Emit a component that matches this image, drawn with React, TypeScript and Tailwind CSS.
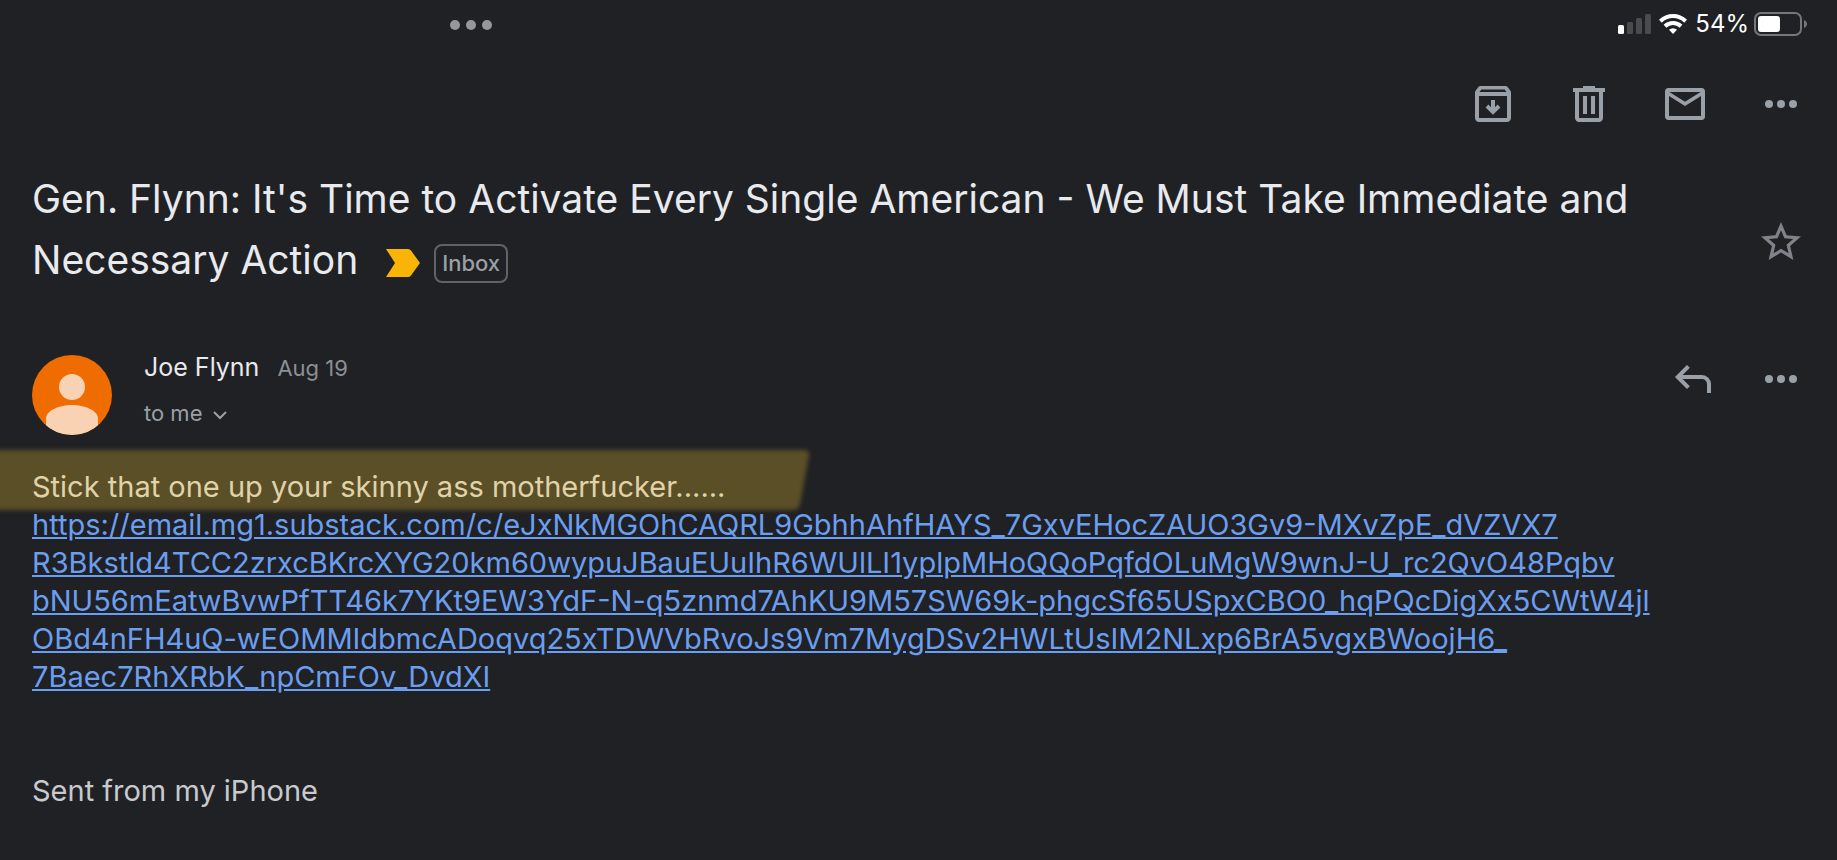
import React from 'react';

const LINK_HREF = '#message-link';

const linkLines = [
  'https://email.mg1.substack.com/c/eJxNkMGOhCAQRL9GbhhAhfHAYS_7GxvEHocZAUO3Gv9-MXvZpE_dVZVX7',
  'R3Bkstld4TCC2zrxcBKrcXYG20km60wypuJBauEUuIhR6WUlLI1yplpMHoQQoPqfdOLuMgW9wnJ-U_rc2QvO48Pqbv',
  'bNU56mEatwBvwPfTT46k7YKt9EW3YdF-N-q5znmd7AhKU9M57SW69k-phgcSf65USpxCBO0_hqPQcDigXx5CWtW4jl',
  'OBd4nFH4uQ-wEOMMIdbmcADoqvq25xTDWVbRvoJs9Vm7MygDSv2HWLtUsIM2NLxp6BrA5vgxBWoojH6_',
  '7Baec7RhXRbK_npCmFOv_DvdXI',
];

function IconButton({ label, children }: { label: string; children: React.ReactNode }) {
  return (
    <button type="button" aria-label={label} className="h-12 w-12 shrink-0 text-[#9aa0a8]">
      <svg viewBox="0 0 24 24" className="h-12 w-12" fill="currentColor">
        {children}
      </svg>
    </button>
  );
}

function MoreDots() {
  return (
    <>
      <circle cx="6" cy="12" r="2" />
      <circle cx="12" cy="12" r="2" />
      <circle cx="18" cy="12" r="2" />
    </>
  );
}

function StatusBar() {
  return (
    <div className="flex h-12 items-center pr-[30px]">
      <button type="button" aria-label="Multitasking" className="ml-[450px] mt-[2px] flex gap-[6px]">
        <span className="h-[10px] w-[10px] rounded-full bg-[#97979b]" />
        <span className="h-[10px] w-[10px] rounded-full bg-[#97979b]" />
        <span className="h-[10px] w-[10px] rounded-full bg-[#97979b]" />
      </button>
      <div className="ml-auto flex items-center">
        <svg width="33" height="20" viewBox="0 0 33 20" fill="#4b4b4e">
          <rect x="0" y="11" width="6" height="9" rx="1.5" fill="#fff" />
          <rect x="9" y="8" width="6" height="12" rx="1.5" />
          <rect x="18" y="4" width="6" height="16" rx="1.5" />
          <rect x="27" y="0" width="6" height="20" rx="1.5" />
        </svg>
        <svg width="28" height="20" viewBox="0 0 28 20" className="ml-2" fill="none" stroke="#fff" strokeWidth="4">
          <path d="M1.4 7.2a18 18 0 0 1 25.2 0" />
          <path d="M6 12.2a11.6 11.6 0 0 1 16 0" />
          <path d="M14 20l-4-4.2a6 6 0 0 1 8 0z" fill="#fff" stroke="none" />
        </svg>
        <span className="ml-2 text-2xl text-white">54%</span>
        <svg width="53" height="24" viewBox="0 0 53 24" className="ml-[5px]">
          <rect x="1" y="1" width="46" height="22" rx="6" fill="none" stroke="#77777b" strokeWidth="2" />
          <rect x="4" y="4" width="22" height="16" rx="3" fill="#fff" />
          <path d="M50 8c4 1.500 4 6.500 0 8z" fill="#77777b" />
        </svg>
      </div>
    </div>
  );
}

function Toolbar() {
  return (
    <div className="mt-8 flex justify-end gap-12 px-8">
      <IconButton label="Archive">
        <path
          fillRule="evenodd"
          d="M5.800 3h12.400c.5 0 .9.200 1.200.6l1.200 1.600c.3.300.4.700.4 1.200V19c0 1.100-.9 2-2 2H5c-1.100 0-2-.9-2-2V6.400c0-.5.100-.9.400-1.200l1.200-1.600c.3-.4.700-.6 1.200-.6zM6.200 4.800L5.200 6h13.600l-1-1.200zM5 8v11h14V8z"
        />
        <path d="M11 10v3.600l-1.300-1.300L8.300 13.700 12 17.400l3.700-3.700-1.400-1.400L13 13.600V10z" />
      </IconButton>
      <IconButton label="Delete">
        <path
          fillRule="evenodd"
          d="M9 3h6v1h5v2h-1v13c0 1.100-.9 2-2 2H7c-1.100 0-2-.9-2-2V6H4V4h5zM7 6v13h10V6z"
        />
        <path d="M9 8h2v9H9zM13 8h2v9h-2z" />
      </IconButton>
      <IconButton label="Mark as unread">
        <path
          fillRule="evenodd"
          d="M3.600 4h16.800c.9 0 1.600.7 1.600 1.600v12.800c0 .9-.7 1.600-1.600 1.600H3.600c-.9 0-1.600-.7-1.600-1.600V5.600C2 4.700 2.700 4 3.600 4zM4 8v10h16V8l-8 5zM4.200 6L12 10.900 19.800 6z"
        />
      </IconButton>
      <IconButton label="More">
        <MoreDots />
      </IconButton>
    </div>
  );
}

function Subject() {
  return (
    <div className="mt-10 flex items-start justify-between px-8">
      <h1 className="text-[39px] leading-[61px] text-[#e8eaed]">
        <span className="block whitespace-nowrap">
          Gen. Flynn: It's Time to Activate Every Single American - We Must Take Immediate and
        </span>
        <span className="flex items-center">
          Necessary Action
          <svg width="34" height="28" viewBox="0 0 34 28" className="ml-7 mt-[6px]" fill="#f9b406">
            <path d="M0 0h22q2 0 3 1.500L34 14l-9 12.500q-1 1.500-3 1.500H0l9-14z" />
          </svg>
          <span className="ml-[14px] mt-[7px] h-[39px] rounded-lg border-2 border-[#5f6368] px-[6px] text-[22px] leading-[35px] font-medium text-[#9aa0a6]">
            Inbox
          </span>
        </span>
      </h1>
      <button type="button" aria-label="Star" className="mt-[50px] h-12 w-12 text-[#80838a]">
        <svg viewBox="0 0 24 24" className="h-12 w-12" fill="currentColor">
          <path d="M22 9.240l-7.190-.620L12 2 9.190 8.630 2 9.240l5.460 4.730L5.820 21 12 17.270 18.180 21l-1.630-7.030L22 9.240zM12 15.400l-3.760 2.270 1-4.280-3.320-2.880 4.380-.380L12 6.100l1.710 4.040 4.380.380-3.320 2.880 1 4.280L12 15.400z" />
        </svg>
      </button>
    </div>
  );
}

function Sender() {
  return (
    <div className="mt-[65px] flex items-start px-8">
      <svg width="80" height="80" viewBox="0 0 80 80" className="shrink-0">
        <clipPath id="avatar">
          <circle cx="40" cy="40" r="40" />
        </clipPath>
        <g clipPath="url(#avatar)">
          <rect width="80" height="80" fill="#ef6c00" />
          <circle cx="40" cy="32" r="13" fill="#f9d2b3" />
          <path d="M14 80V64c0-9 14-14 26-14s26 5 26 14v16z" fill="#f9d2b3" />
        </g>
      </svg>
      <div className="ml-8">
        <div className="flex items-baseline leading-6">
          <span className="text-[25px] leading-6 text-[#e8eaed]">Joe Flynn</span>
          <span className="ml-[18px] text-[22px] text-[#8c8f94]">Aug 19</span>
        </div>
        <button type="button" className="mt-[21px] flex items-center text-[22px] leading-6 text-[#9aa0a6]">
          to me
          <svg width="14" height="10" viewBox="0 0 14 10" className="ml-[11px] mt-1" fill="none" stroke="currentColor" strokeWidth="2">
            <path d="M1 2l6 6 6-6" />
          </svg>
        </button>
      </div>
      <div className="ml-auto flex gap-10">
        <IconButton label="Reply">
          <path
            d="M9.700 5.700L4.400 11l5.300 5.300M4.400 11H16.500a3.500 3.500 0 0 1 3.500 3.500V19"
            fill="none"
            stroke="currentColor"
            strokeWidth="2"
          />
        </IconButton>
        <IconButton label="More message options">
          <MoreDots />
        </IconButton>
      </div>
    </div>
  );
}

function MessageBody() {
  return (
    <div className="relative mt-[33px] px-8 text-[29px] leading-[38px]">
      {/* marker stroke behind the first line */}
      <svg width="840" height="80" viewBox="-20 0 840 80" className="absolute -left-5 -top-7 blur-[2px]">
        <path d="M-20 10H804q6 0 5 6l-9 48q-1 6-7 6H-20z" fill="#5b4f27" />
      </svg>
      <p className="relative text-[#e0d3a8]">Stick that one up your skinny ass motherfucker......</p>
      <a href={LINK_HREF} className="relative block text-[#6c9ef0] underline">
        {linkLines.map((line) => (
          <span key={line} className="block whitespace-nowrap">{line}</span>
        ))}
      </a>
      <p className="mt-[76px] text-[#c8cacd]">Sent from my iPhone</p>
    </div>
  );
}

export default function App() {
  return (
    <main className="min-h-screen overflow-hidden bg-[#202124] font-['Inter','Liberation_Sans',sans-serif]">
      <StatusBar />
      <Toolbar />
      <Subject />
      <Sender />
      <MessageBody />
    </main>
  );
}
